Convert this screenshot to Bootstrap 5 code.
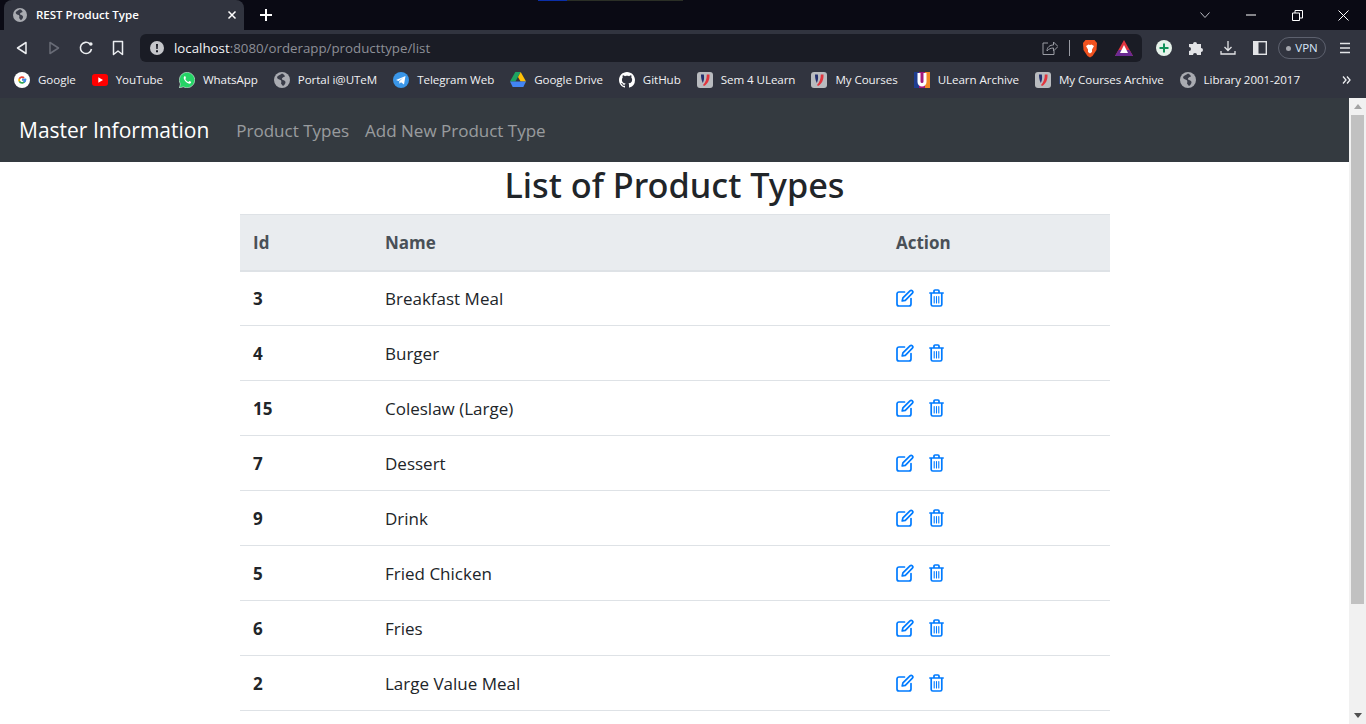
<!DOCTYPE html>
<html lang="en">
<head>
  <meta charset="UTF-8" />
  <meta name="viewport" content="width=device-width, initial-scale=1.0" />
  <title>REST Product Type</title>
  <link href="https://cdn.jsdelivr.net/npm/bootstrap@5.3.0/dist/css/bootstrap.min.css" rel="stylesheet" />
  <style>
    html, body { height: 100%; overflow: hidden; }
    body { font-family: "Open Sans", "Noto Sans", sans-serif; color: #212529; }
    .win-shell { height: 724px; }

    /* browser chrome */
    .tab-strip { height: 30px; background: #0a0a14; padding-left: 4px; position: relative; }
    .load-streak { position: absolute; top: 0; left: 538px; width: 145px; height: 1px; background: #2b2f26; }
    .load-streak::before { content: ""; display: block; width: 29px; height: 1px; background: #0b2fa8; }
    .tab-item { width: 240px; height: 30px; background: #31343f; border-radius: 8px 8px 0 0; padding: 0 7px 0 9px; color: #fff; font-size: 11.5px; font-weight: 600; }
    .tab-title { margin-left: 9px; }
    .win-btns span { width: 46px; height: 30px; }
    .tool-row { height: 36px; background: #31343f; padding-left: 14px; padding-right: 15px; }
    .tool-nav { gap: 16px; width: 126px; }
    .url-box { width: 1002px; height: 28px; background: #1a1c25; border-radius: 6px; padding: 0 9px 0 10px; font-size: 13.3px; color: #8d8f97; }
    .url-host { color: #f2f3f5; }
    .url-text { margin: 1px 0 0 10px; }
    .url-share { margin-right: 3px; }
    .url-divider { width: 1px; height: 16px; background: #9a9ca4; }
    .url-bat { margin-left: 9px; }
    .ext-icons { gap: 16px; }
    .ext-side { margin-left: 1px; }
    .vpn-pill { width: 48px; height: 22px; margin: 0 -3px 0 -5px; border: 1px solid #5d616e; border-radius: 11px; font-size: 11.5px; color: #d5e4f7; gap: 4px; }
    .vpn-pill i { width: 5px; height: 5px; border-radius: 50%; background: #a5a7ae; }
    .mark-row { height: 32px; background: #31343f; padding: 0 0 4px 14px; font-size: 11.6px; letter-spacing: -.07px; color: #f0f1f3; gap: 16px; white-space: nowrap; }
    .mark-item { gap: 8px; }
    .mark-more { margin-left: auto; margin-right: 15px; }

    /* page */
    .page-area { height: 626px; }
    .page-main { width: 1349px; overflow: hidden; }
    .master-nav { height: 64px; background: #343a40; padding: 2px 19px 0; }
    .master-nav .navbar-brand { font-size: 21px; color: #fff; margin-right: 19px; padding: 0; }
    .master-nav .nav-link { font-size: 17px; color: rgba(255,255,255,.5); padding: 0 9px; }
    .list-title { font-family: "Noto Sans", "Open Sans", sans-serif; font-size: 34.3px; font-weight: 500; line-height: 46px; margin: 0 0 6px; color: #212529; }
    .list-wrap { width: 870px; margin: 0 auto; }
    .type-table { table-layout: fixed; font-size: 17px; margin: 0; }
    .type-table th, .type-table td { padding: 1px 13.5px 0; height: 55px; vertical-align: middle; border-top: 0; border-bottom: 1px solid #dee2e6; }
    .type-table thead th { background: #e9ecef; color: #495057; border-top: 1px solid #dee2e6; border-bottom: 2px solid #dee2e6; height: 56px; font-weight: 700; }
    .type-table tbody th { font-weight: 700; }
    .col-id { width: 132px; }
    .col-name { width: 511px; }
    .act-icons { gap: 15px; margin-top: -1px; }
    .act-icons svg { display: block; fill: none; stroke: #007bff; stroke-width: 1.7; stroke-linecap: round; stroke-linejoin: round; }
    .act-icons .trash-bars { stroke-width: 1.1; }
    .scroll-rail { width: 17px; background: #f1f1f1; padding: 0 2px; }
    .scroll-cap { height: 17px; }
    .scroll-thumb { height: 489px; background: #c1c1c1; }
  </style>
</head>
<body>

  <svg width="0" height="0" class="d-block position-absolute">
    <symbol id="ico-globe" viewBox="0 0 16 16"><circle cx="8" cy="8" r="8" fill="#a9abb1"/><path d="M8 1.500C6 3 4 3.500 3 5c0 2 2 2.500 3.500 3 1 .5 1 2 .5 3.500.8 1 1.500 2 2 2.500 1.500-.8 2.500-2.500 2.500-4-.5-1.500-2-2-3.500-2.500C7.500 6 9 5 11 4.500 10.500 3 9.500 2 8 1.500z" fill="#3a3d49"/></symbol>
    <symbol id="ico-ulearn" viewBox="0 0 16 16"><rect width="16" height="16" rx="3" fill="#b9bbbf"/><path d="M4 2.500h2.800c.6 3 .3 6-1 8.500C4.500 8.500 4 5.500 4 2.500z" fill="#24306e"/><path d="M12.500 2.500c.3 5-1.500 9.500-5.500 11.500l-1-1c2.500-2.500 3.800-6 3.800-10.500z" fill="#e2353e"/></symbol>
  </svg>

  <div class="win-shell d-flex flex-column">

    <div class="tab-strip d-flex align-items-center">
      <div class="load-streak"></div>
      <div class="tab-item d-flex align-items-center">
        <svg width="14" height="14"><use href="#ico-globe"/></svg>
        <span class="tab-title">REST Product Type</span>
        <svg class="ms-auto" width="10" height="10" viewBox="0 0 10 10"><path d="M1.500 1.500l7 7M8.500 1.500l-7 7" stroke="#fff" stroke-width="1.500"/></svg>
      </div>
      <svg class="ms-3" width="12" height="12" viewBox="0 0 12 12"><path d="M6 0v12M0 6h12" stroke="#fff" stroke-width="2"/></svg>
      <div class="win-btns d-flex ms-auto">
        <span class="d-flex align-items-center justify-content-center"><svg width="10" height="6" viewBox="0 0 10 6"><path d="M.5.500L5 5.500 9.500.500" fill="none" stroke="#b9bbc2"/></svg></span>
        <span class="d-flex align-items-center justify-content-center"><svg width="10" height="2" viewBox="0 0 10 2"><path d="M0 1h10" stroke="#fff"/></svg></span>
        <span class="d-flex align-items-center justify-content-center"><svg width="11" height="11" viewBox="0 0 11 11"><path d="M.5 3h7v7.500h-7zM3 3V.5h7.500V8H7.500" fill="none" stroke="#fff"/></svg></span>
        <span class="d-flex align-items-center justify-content-center"><svg width="11" height="11" viewBox="0 0 11 11"><path d="M.5.500l10 10M10.500.500l-10 10" stroke="#fff"/></svg></span>
      </div>
    </div>

    <div class="tool-row d-flex align-items-center">
      <div class="tool-nav d-flex align-items-center">
        <svg width="16" height="16" viewBox="0 0 16 16"><path d="M12 2.500v11L3.500 8z" fill="none" stroke="#eceef1" stroke-width="1.500" stroke-linejoin="round"/></svg>
        <svg width="16" height="16" viewBox="0 0 16 16"><path d="M4 2.500v11L12.500 8z" fill="none" stroke="#686b76" stroke-width="1.500" stroke-linejoin="round"/></svg>
        <svg width="16" height="16" viewBox="0 0 16 16"><path d="M13.500 9A5.600 5.600 0 1 1 11.800 3.800" fill="none" stroke="#eceef1" stroke-width="1.600"/><circle cx="12.800" cy="4" r="1.800" fill="#eceef1"/></svg>
        <svg width="16" height="16" viewBox="0 0 16 16"><path d="M3.500 1.500h9v13L8 11l-4.500 3.500z" fill="none" stroke="#eceef1" stroke-width="1.500" stroke-linejoin="round"/></svg>
      </div>
      <div class="url-box d-flex align-items-center">
        <svg width="14" height="14" viewBox="0 0 14 14"><circle cx="7" cy="7" r="7" fill="#c5c6ca"/><path d="M6 3h2l-.3 5H6.300zM6 9.300h2v1.900H6z" fill="#1a1c25"/></svg>
        <span class="url-text"><span class="url-host">localhost</span>:8080/orderapp/producttype/list</span>
        <span class="ms-auto d-flex align-items-center gap-2">
          <svg class="url-share" width="16" height="16" viewBox="0 0 16 16"><path d="M6 3H1v11.500h11V11M5 11c0-4 3-6 6.500-6V2L16 6.500 11.500 11V8C9 8 6.500 9 5 11z" fill="none" stroke="#9a9ca4"/></svg>
          <span class="url-divider"></span>
          <svg class="ms-1" width="16" height="19" viewBox="0 0 16 19"><path d="M3.500 1h9l2.500 3-.5 7-4 6-2.500 1.500L5.500 17l-4-6L1 4z" fill="#f0521f"/><path d="M4 7l2.500-1.500L8 6l1.500-.5L12 7l-2 3.500V13L8 14.500 6 13v-2.500z" fill="#fff"/></svg>
          <svg class="url-bat" width="18" height="16" viewBox="0 0 18 16"><path d="M9 0l9 16H0z" fill="#e2353e"/><path d="M0 16l3.500-6h11L18 16z" fill="#6a2a93"/><path d="M9 5l4 8H5z" fill="#fff"/></svg>
        </span>
      </div>
      <div class="ext-icons d-flex align-items-center ms-auto">
        <svg width="16" height="16" viewBox="0 0 16 16"><circle cx="8" cy="8" r="8" fill="#e6f2ea"/><path d="M8 3.500v9M3.500 8h9" stroke="#12925a" stroke-width="2"/></svg>
        <svg width="16" height="16" viewBox="0 0 16 16"><path d="M1 4h4a2 2 0 1 1 4 0h4v4a2 2 0 1 1 0 4v3H9a2 2 0 1 0-4 0H1v-4a2 2 0 1 0 0-4z" fill="#e3e4e7"/></svg>
        <svg width="16" height="16" viewBox="0 0 16 16"><path d="M8 1v9M4.500 7L8 10.500 11.500 7M1 11v3h14v-3" fill="none" stroke="#e3e4e7" stroke-width="1.300"/></svg>
        <svg class="ext-side" width="14" height="14" viewBox="0 0 14 14"><rect x=".7" y=".7" width="12.600" height="12.600" fill="none" stroke="#e3e4e7" stroke-width="1.400"/><rect x="1" y="1" width="4.500" height="12" fill="#e3e4e7"/></svg>
        <span class="vpn-pill d-flex align-items-center justify-content-center"><i></i>VPN</span>
        <svg width="12" height="12" viewBox="0 0 12 12"><path d="M1 1.500h10M1 6h10M1 10.500h10" stroke="#e3e4e7" stroke-width="1.600"/></svg>
      </div>
    </div>

    <div class="mark-row d-flex align-items-center">
      <span class="mark-item d-flex align-items-center">
        <svg width="16" height="16" viewBox="0 0 16 16"><circle cx="8" cy="8" r="8" fill="#fff"/><path d="M8 6.800h4.200c.3 2.800-1.600 5-4.200 5a3.800 3.800 0 0 1-3.400-2l1.500-1.100C6.500 9.500 7.200 10 8 10c1 0 1.800-.5 2-1.500H8z" fill="#34a853"/><path d="M4.600 9.800a3.800 3.800 0 0 1 0-3.600l1.500 1.100a2 2 0 0 0 0 1.400z" fill="#fbbc05"/><path d="M4.600 6.200A3.800 3.800 0 0 1 10.700 5.300L9.400 6.500A2 2 0 0 0 6.100 7.300z" fill="#ea4335"/><path d="M12.200 6.800H8v1.700h2c-.1.500-.4.900-.8 1.200l1.400 1.100c1.200-1 1.800-2.400 1.600-4z" fill="#4285f4"/></svg>
        Google</span>
      <span class="mark-item d-flex align-items-center">
        <svg width="16" height="12" viewBox="0 0 16 12"><rect width="16" height="12" rx="3" fill="#f00"/><path d="M6.300 3.300v5.400L11 6z" fill="#fff"/></svg>
        YouTube</span>
      <span class="mark-item d-flex align-items-center">
        <svg width="16" height="16" viewBox="0 0 16 16"><path d="M.3 16l1.100-4A7.700 7.700 0 1 1 4.300 14.800z" fill="#25d366" stroke="#fff" stroke-width=".5"/><path d="M5.500 4.200c-.5.400-1 1.300-.7 2.400.5 2 2.500 4.200 4.800 5 1.100.3 2-.2 2.400-.9.200-.4.200-.8.100-.9l-1.800-.9-.9 1c-1.300-.4-2.600-1.700-3.100-3l.7-.8L6.300 4.200c-.2-.2-.5-.2-.8 0z" fill="#fff"/></svg>
        WhatsApp</span>
      <span class="mark-item d-flex align-items-center">
        <svg width="16" height="16"><use href="#ico-globe"/></svg>
        Portal i@UTeM</span>
      <span class="mark-item d-flex align-items-center">
        <svg width="16" height="16" viewBox="0 0 16 16"><circle cx="8" cy="8" r="8" fill="#3a96e8"/><path d="M3 8l9.500-4-1.500 8.500-3-2.200-1.500 1.500-.3-2.500 4.300-3.800L5.500 9z" fill="#fff"/></svg>
        Telegram Web</span>
      <span class="mark-item d-flex align-items-center">
        <svg width="16" height="15" viewBox="0 0 16 15"><path d="M5.300 0h5.400L5.400 9.500H0z" fill="#1ea362"/><path d="M10.700 0L16 9.500h-5.400L8 5z" fill="#ffc107"/><path d="M0 9.500h16L13.300 15H2.700z" fill="#4285f4"/></svg>
        Google Drive</span>
      <span class="mark-item d-flex align-items-center">
        <svg width="16" height="16" viewBox="0 0 16 16" fill="#fff"><path d="M8 0C3.580 0 0 3.580 0 8c0 3.540 2.290 6.530 5.470 7.590.4.070.55-.17.55-.38 0-.19-.01-.82-.01-1.490-2.010.37-2.530-.49-2.690-.94-.09-.23-.48-.94-.82-1.130-.28-.15-.68-.52-.01-.53.63-.01 1.080.58 1.230.82.72 1.210 1.870.87 2.330.66.070-.52.28-.87.51-1.070-1.780-.2-3.640-.89-3.640-3.950 0-.87.31-1.590.82-2.150-.08-.2-.36-1.020.08-2.120 0 0 .67-.21 2.200.82.64-.18 1.320-.27 2-.27.68 0 1.360.09 2 .27 1.530-1.040 2.200-.82 2.200-.82.44 1.100.16 1.920.08 2.120.51.56.82 1.270.82 2.150 0 3.070-1.870 3.750-3.650 3.950.29.25.54.73.54 1.480 0 1.070-.01 1.930-.01 2.200 0 .21.15.46.55.38A8.012 8.012 0 0 0 16 8c0-4.420-3.580-8-8-8z"/></svg>
        GitHub</span>
      <span class="mark-item d-flex align-items-center">
        <svg width="16" height="16"><use href="#ico-ulearn"/></svg>
        Sem 4 ULearn</span>
      <span class="mark-item d-flex align-items-center">
        <svg width="16" height="16"><use href="#ico-ulearn"/></svg>
        My Courses</span>
      <span class="mark-item d-flex align-items-center">
        <svg width="16" height="16" viewBox="0 0 16 16"><rect width="5" height="16" fill="#1f3d8f"/><rect x="5" width="6" height="16" fill="#a3197b"/><rect x="11" width="5" height="16" fill="#f08a24"/><path d="M3.500 1h3v8.500a1.500 1.500 0 0 0 3 0V1h3v9a4.500 4.500 0 0 1-9 0z" fill="#fff"/></svg>
        ULearn Archive</span>
      <span class="mark-item d-flex align-items-center">
        <svg width="16" height="16"><use href="#ico-ulearn"/></svg>
        My Courses Archive</span>
      <span class="mark-item d-flex align-items-center">
        <svg width="16" height="16"><use href="#ico-globe"/></svg>
        Library 2001-2017</span>
      <svg class="mark-more" width="9" height="8" viewBox="0 0 9 8"><path d="M1 .5L4 4 1 7.500M5 .5L8 4 5 7.500" fill="none" stroke="#eceef1" stroke-width="1.300"/></svg>
    </div>

    <div class="page-area d-flex">
      <div class="page-main">
        <nav class="navbar navbar-expand master-nav">
          <a class="navbar-brand" href="#">Master Information</a>
          <ul class="navbar-nav">
            <li class="nav-item"><a class="nav-link" href="#">Product Types</a></li>
            <li class="nav-item"><a class="nav-link" href="#">Add New Product Type</a></li>
          </ul>
        </nav>

        <div class="list-wrap">
          <h1 class="list-title text-center">List of Product Types</h1>
          <table class="table type-table">
            <thead>
              <tr><th class="col-id">Id</th><th class="col-name">Name</th><th>Action</th></tr>
            </thead>
            <tbody id="type-rows"></tbody>
          </table>
        </div>
      </div>
      <div class="scroll-rail d-flex flex-column">
        <div class="scroll-cap d-flex align-items-center justify-content-center">
          <svg width="8" height="5" viewBox="0 0 8 5"><path d="M4 0l4 5H0z" fill="#a3a3a3"/></svg>
        </div>
        <div class="scroll-thumb"></div>
        <div class="scroll-cap d-flex align-items-center justify-content-center mt-auto">
          <svg width="8" height="5" viewBox="0 0 8 5"><path d="M0 0h8L4 5z" fill="#505050"/></svg>
        </div>
      </div>
    </div>
  </div>

  <script src="https://cdn.jsdelivr.net/npm/bootstrap@5.3.0/dist/js/bootstrap.bundle.min.js"></script>
  <script>
    const types = [
      [3, "Breakfast Meal"], [4, "Burger"], [15, "Coleslaw (Large)"], [7, "Dessert"],
      [9, "Drink"], [5, "Fried Chicken"], [6, "Fries"], [2, "Large Value Meal"]
    ];

    const editIcon = `<svg viewBox="0 0 18 18" width="18" height="18"><path d="M8.500 3H3A2 2 0 0 0 1 5v10a2 2 0 0 0 2 2h10a2 2 0 0 0 2-2V9.500"/><path d="M14 1.800a1.700 1.700 0 0 1 2.400 2.400L9.300 11.300l-3.100.7.700-3.100z"/></svg>`;
    const trashIcon = `<svg viewBox="0 0 15 18" width="15" height="18"><path d="M.8 4h13.400M5 4V2a1 1 0 0 1 1-1h3a1 1 0 0 1 1 1v2M2.200 4v11.500A1.600 1.600 0 0 0 3.800 17h7.400a1.600 1.600 0 0 0 1.600-1.600V4"/><path class="trash-bars" d="M5.200 7.500v6.500M7.500 7.500v6.500M9.800 7.500v6.500"/></svg>`;

    const rows = document.getElementById("type-rows");
    types.forEach(([id, name]) => {
      const tr = document.createElement("tr");
      tr.innerHTML = `<th>${id}</th><td>${name}</td><td><div class="act-icons d-flex">${editIcon}${trashIcon}</div></td>`;
      rows.appendChild(tr);
    });
  </script>

</body>
</html>
